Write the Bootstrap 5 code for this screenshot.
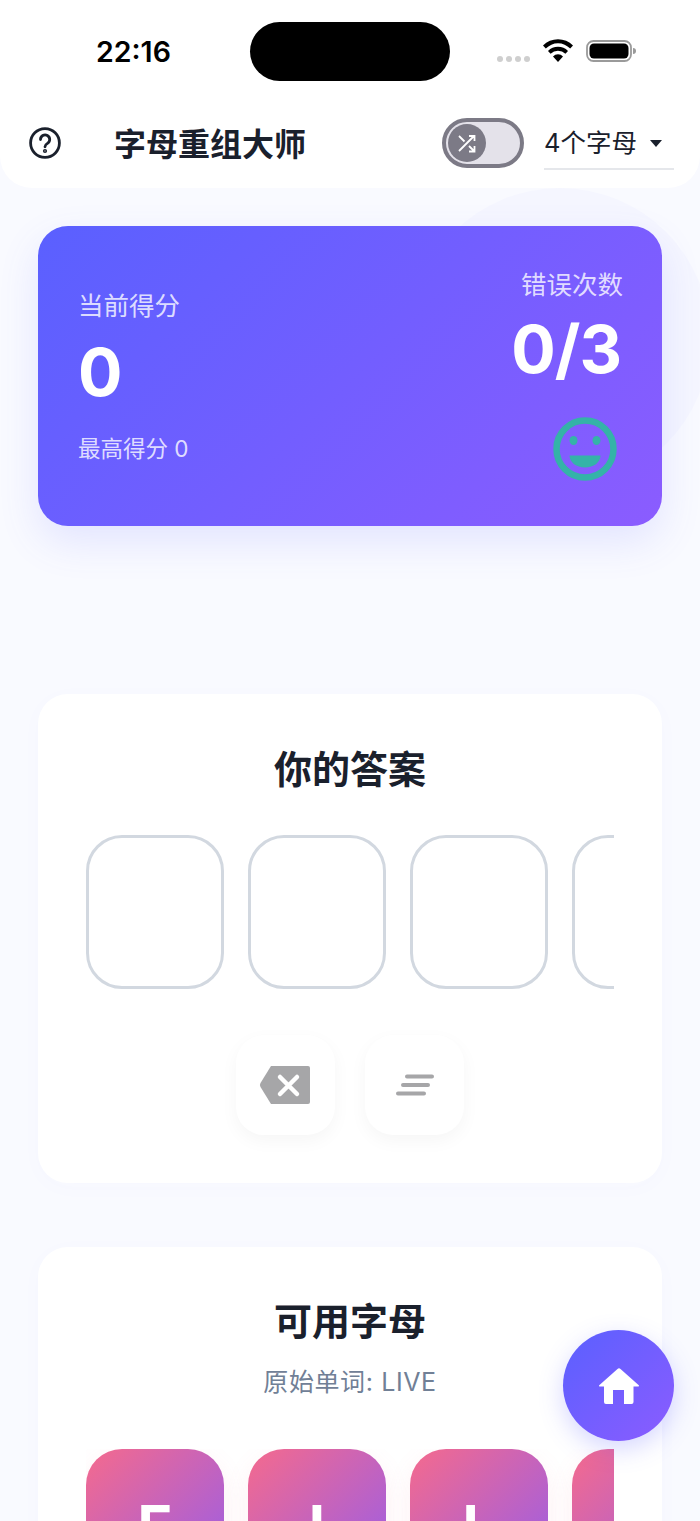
<!DOCTYPE html>
<html lang="zh">
<head>
  <meta charset="UTF-8">
  <title>字母重组大师</title>
  <link href="https://cdn.jsdelivr.net/npm/bootstrap@5.3.3/dist/css/bootstrap.min.css" rel="stylesheet">
  <style>
    html, body { height: 1521px; overflow: hidden; }
    body {
      background: #f9faff;
      color: #1a202c;
      font-family: Inter, "Noto Sans CJK SC", sans-serif;
      position: relative;
    }
    .bg-blob {
      position: absolute; width: 300px; height: 300px; left: 410px; top: 188px;
      border-radius: 50%; background: #f5f6ff;
    }
    .top-head { background: #fff; height: 188px; border-radius: 0 0 32px 32px; position: relative; }
    .status-row { height: 100px; position: relative; }
    .clock { position: absolute; left: 96px; top: 34px; font-size: 28.5px; font-weight: 600; line-height: 36px; color: #000; }
    .island { position: absolute; left: 250px; top: 22px; width: 200px; height: 59px; border-radius: 30px; background: #000; }
    .status-icons { position: absolute; left: 497px; top: 39px; gap: 12px; }
    .sig-dots { gap: 3px; margin-top: 17px; }
    .sig-dots i { width: 6px; height: 6px; border-radius: 50%; background: #cfcfcf; display: block; }
    .nav-row { height: 88px; padding: 0 26px 0 29px; }
    .help-ico { margin-top: -2px; }
    .page-title { font-size: 32px; font-weight: 700; margin: 1px 0 0 53px; line-height: 44px; color: #1a202c; }
    .mode-toggle {
      width: 82px; height: 50px; border: 4px solid #7c7a86; border-radius: 25px; background: #e4e2ea;
      padding: 2px; margin: -2px 20px 0 0;
    }
    .mode-knob { width: 38px; height: 38px; border-radius: 50%; background: #7c7a86; }
    .len-select { width: 130px; height: 51px; border-bottom: 2px solid #e5e7eb; font-size: 25.5px; padding: 0 12px 0 0; margin-top: 1px; }
    .len-caret { width: 0; height: 0; border-left: 6.5px solid transparent; border-right: 6.5px solid transparent; border-top: 7px solid #1a202c; }

    .main-col { padding: 38px 38px 0; position: relative; }
    .score-panel {
      height: 300px; border-radius: 30px; padding: 0 39px 0 40px; color: #fff;
      background: linear-gradient(135deg, #5a60ff 0%, #8b5cff 100%);
      box-shadow: 0 16px 40px rgba(90, 96, 255, .14);
    }
    .score-lbl { font-size: 25.5px; line-height: 36px; color: rgba(255,255,255,.8); }
    .score-num { font-size: 66px; font-weight: 700; line-height: 84px; margin-top: 6px; }
    .best-lbl { font-size: 22.5px; line-height: 32px; color: rgba(255,255,255,.8); margin-top: 19px; }
    .err-col { margin-bottom: 5px; margin-left: -1px; }
    .err-num { font-size: 66px; font-weight: 700; line-height: 84px; margin-top: 4px; letter-spacing: -1px; padding-right: 2px; }
    .mood { margin-top: 26px; margin-right: 6px; display: block; }

    .play-panel { background: #fff; border-radius: 30px; padding: 48px; box-shadow: 0 4px 24px rgba(90,96,255,.02); }
    .answer-panel { margin-top: 168px; height: 489px; padding-top: 49px; }
    .letters-panel { margin-top: 64px; height: 400px; }
    .panel-head { font-size: 38px; font-weight: 700; line-height: 52px; text-align: center; margin: 0; color: #1a202c; }
    .tile-strip { display: flex; gap: 24px; overflow: hidden; }
    .tile-strip > div { flex: 0 0 138px; height: 154px; border-radius: 36px; }
    .slot { border: 3px solid #d2d8e0; background: #fff; }
    .answer-panel .tile-strip { margin-top: 40px; }
    .tools-row { gap: 30px; margin-top: 46px; }
    .tool-btn {
      width: 99px; height: 100px; border-radius: 28px; background: #fff; border: 0; padding: 0;
      box-shadow: 0 6px 18px rgba(0,0,0,.04);
    }
    .back-ico { margin-left: -2px; }
    .sub-word { font-size: 25px; line-height: 36px; color: #718096; text-align: center; margin-top: 17px; letter-spacing: .6px; }
    .letters-panel .tile-strip { margin-top: 49px; padding-bottom: 30px; }
    .letter-tile {
      background: linear-gradient(135deg, #f56a8d 0%, #905cf0 100%); color: #fff;
      font-size: 58px; font-weight: 700; box-shadow: 0 8px 24px rgba(245,106,141,.1);
    }
    .home-fab {
      position: absolute; left: 563px; top: 1330px; width: 111px; height: 111px; border-radius: 50%; border: 0; padding: 0;
      background: linear-gradient(135deg, #5a60ff 0%, #8b5cff 100%);
      box-shadow: 0 8px 24px rgba(90,96,255,.25);
    }
  </style>
</head>
<body>
  <div class="bg-blob"></div>

  <header class="top-head">
    <div class="status-row">
      <div class="clock">22:16</div>
      <div class="island"></div>
      <div class="status-icons d-flex">
        <div class="sig-dots d-flex"><i></i><i></i><i></i><i></i></div>
        <svg width="32" height="24" viewBox="0 0 32 24"><path d="M16 23l-5-5.6a7 7 0 0 1 10 0zM8.600 14.800L6 12a14 14 0 0 1 20 0l-2.600 2.800a10.500 10.500 0 0 0-14.800 0zM3.800 9.500L1 6.500a21 21 0 0 1 30 0l-2.800 3a17 17 0 0 0-24.400 0z" fill="#000"/></svg>
        <svg width="50" height="24" viewBox="0 0 50 24"><rect x="1" y="2" width="44" height="20" rx="6.500" fill="#fff" stroke="#9a9a9a" stroke-width="1.800"/><rect x="3.500" y="4.500" width="39" height="15" rx="4.500" fill="#000"/><path d="M47 9v6a3 3 0 0 0 0-6z" fill="#9a9a9a"/></svg>
      </div>
    </div>
    <nav class="nav-row d-flex align-items-center">
      <svg class="help-ico" width="32" height="32" viewBox="0 0 32 32" fill="none" stroke="#1a202c" stroke-width="2.800" stroke-linecap="round"><circle cx="16" cy="16" r="14.400"/><path d="M11.500 12.500a4.600 4.600 0 1 1 7 3.900c-1.700 1-2.500 1.900-2.500 3.400"/><circle cx="16" cy="24" r=".7" fill="#1a202c"/></svg>
      <h1 class="page-title">字母重组大师</h1>
      <div class="ms-auto d-flex align-items-center">
        <div class="mode-toggle">
          <div class="mode-knob d-flex align-items-center justify-content-center">
            <svg width="20" height="20" viewBox="0 0 20 20" fill="none" stroke="#fff" stroke-width="1.800"><path d="M2 3l5.500 5.500M12 13l5 5M2 18L17 3M12 3h5.500v5M17.500 13v5.500H12"/></svg>
          </div>
        </div>
        <div class="len-select d-flex align-items-center justify-content-between">
          <span>4个字母</span><span class="len-caret"></span>
        </div>
      </div>
    </nav>
  </header>

  <main class="main-col">
    <section class="score-panel d-flex justify-content-between align-items-center">
      <div>
        <div class="score-lbl">当前得分</div>
        <div class="score-num">0</div>
        <div class="best-lbl">最高得分 0</div>
      </div>
      <div class="err-col text-end">
        <div class="score-lbl">错误次数</div>
        <div class="err-num">0/3</div>
        <svg class="mood ms-auto" width="64" height="64" viewBox="0 0 64 64"><circle cx="32" cy="32" r="28.500" fill="none" stroke="#34b3a8" stroke-width="6.500"/><ellipse cx="20.500" cy="23.500" rx="4" ry="4.500" fill="#34b3a8"/><ellipse cx="43.500" cy="23.500" rx="4" ry="4.500" fill="#34b3a8"/><path d="M16.500 38.500h31c0 7-7 12-15.500 12s-15.500-5-15.500-12z" fill="#34b3a8"/></svg>
      </div>
    </section>

    <section class="play-panel answer-panel">
      <h2 class="panel-head">你的答案</h2>
      <div class="tile-strip">
        <div class="slot"></div><div class="slot"></div><div class="slot"></div><div class="slot"></div>
      </div>
      <div class="tools-row d-flex justify-content-center">
        <button class="tool-btn d-flex align-items-center justify-content-center" type="button" aria-label="删除">
          <svg class="back-ico" width="52" height="40" viewBox="0 0 52 40"><path d="M12 1h37a2 2 0 0 1 2 2v34a2 2 0 0 1-2 2H12L1.500 22a4 4 0 0 1 0-4z" fill="#a6a6a8"/><path d="M21 12l17 17M38 12L21 29" stroke="#fff" stroke-width="4.500" stroke-linecap="round"/></svg>
        </button>
        <button class="tool-btn d-flex align-items-center justify-content-center" type="button" aria-label="整理">
          <svg width="40" height="26" viewBox="0 0 40 26" fill="none" stroke="#a6a6a8" stroke-width="4" stroke-linecap="round"><path d="M12 4.500h25M8 13h25M3 21.500h26"/></svg>
        </button>
      </div>
    </section>

    <section class="play-panel letters-panel">
      <h2 class="panel-head">可用字母</h2>
      <div class="sub-word">原始单词: LIVE</div>
      <div class="tile-strip">
        <div class="letter-tile d-flex align-items-center justify-content-center">E</div>
        <div class="letter-tile d-flex align-items-center justify-content-center">I</div>
        <div class="letter-tile d-flex align-items-center justify-content-center">L</div>
        <div class="letter-tile d-flex align-items-center justify-content-center">V</div>
      </div>
    </section>
  </main>

  <button class="home-fab d-flex align-items-center justify-content-center" type="button" aria-label="首页">
    <svg width="40" height="36" viewBox="0 0 40 36"><path d="M18.500 1a2 2 0 0 1 3 0L39.500 17a.8.8 0 0 1-.5 1.500H34.500V34a2 2 0 0 1-2 2H25V22H14v14H7a2 2 0 0 1-2-2V18.500H1a.8.8 0 0 1-.5-1.500z" fill="#fff"/></svg>
  </button>
</body>
</html>
